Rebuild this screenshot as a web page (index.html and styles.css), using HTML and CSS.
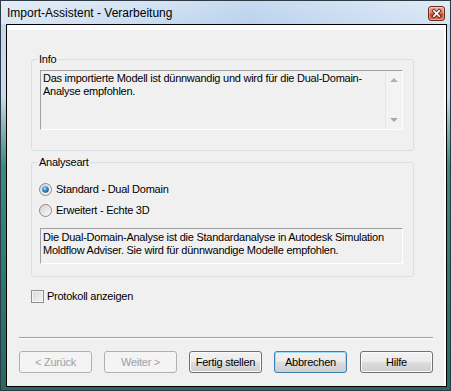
FILE: index.html
```html
<!DOCTYPE html>
<html lang="de">
<head>
<meta charset="UTF-8">
<title>Import-Assistent - Verarbeitung</title>
<link rel="stylesheet" href="styles.css">
</head>
<body>

<!-- Dialogfenster -->
<div class="window">
  <div class="titlebar">
    <span class="title">Import-Assistent - Verarbeitung</span>
    <button class="close" title="Schließen">
      <svg width="17" height="15" viewBox="0 0 17 15">
        <path d="M5.5 4.5 L11.5 10.5 M11.5 4.5 L5.5 10.5" stroke="#4a160c" stroke-width="3.8" stroke-linecap="square"/>
        <path d="M5.5 4.5 L11.5 10.5 M11.5 4.5 L5.5 10.5" stroke="#fff" stroke-width="2" stroke-linecap="square"/>
      </svg>
    </button>
  </div>

  <div class="client">
    <div class="page">

      <fieldset class="group info">
        <legend>Info</legend>
        <div class="memo memo-scroll">
          <div class="memo-text">Das importierte Modell ist dünnwandig und wird für die Dual-Domain-<br>Analyse empfohlen.</div>
          <div class="scrollbar">
            <span class="arrow up"></span>
            <span class="arrow down"></span>
          </div>
        </div>
      </fieldset>

      <fieldset class="group analysis">
        <legend>Analyseart</legend>
        <label class="option">
          <svg class="radio" width="13" height="13" viewBox="0 0 13 13">
            <defs>
              <linearGradient id="radioBg" x1="0" y1="0" x2="1" y2="1">
                <stop offset="0" stop-color="#d2d2d2"/>
                <stop offset="1" stop-color="#fcfcfc"/>
              </linearGradient>
              <radialGradient id="radioDot" cx="0.4" cy="0.35" r="0.75">
                <stop offset="0" stop-color="#a6e4ff"/>
                <stop offset="0.45" stop-color="#2f92d2"/>
                <stop offset="1" stop-color="#16486f"/>
              </radialGradient>
            </defs>
            <circle cx="6.5" cy="6.5" r="6" fill="url(#radioBg)" stroke="#8c8c8c"/>
            <circle cx="6.5" cy="6.5" r="3.3" fill="url(#radioDot)"/>
          </svg>
          <span>Standard - Dual Domain</span>
        </label>
        <label class="option">
          <svg class="radio" width="13" height="13" viewBox="0 0 13 13">
            <circle cx="6.5" cy="6.5" r="6" fill="url(#radioBg)" stroke="#8c8c8c"/>
          </svg>
          <span>Erweitert - Echte 3D</span>
        </label>
        <div class="memo desc">Die Dual-Domain-Analyse ist die Standardanalyse in Autodesk Simulation<br>Moldflow Adviser. Sie wird für dünnwandige Modelle empfohlen.</div>
      </fieldset>

      <label class="check">
        <span class="checkbox"></span>
        <span>Protokoll anzeigen</span>
      </label>

      <div class="separator"></div>

      <div class="buttons">
        <button class="btn" disabled>&lt; Zurück</button>
        <button class="btn" disabled>Weiter &gt;</button>
        <button class="btn">Fertig stellen</button>
        <button class="btn default">Abbrechen</button>
        <button class="btn help">Hilfe</button>
      </div>

    </div>
  </div>
</div>

</body>
</html>
```

FILE: styles.css
```css
body {
  margin: 0;
  font-family: 'Liberation Sans', Arial, sans-serif;
  font-size: 11px;
  letter-spacing: -0.25px;
  color: #000;
  background-color: #2a7a6e;
}
.window {
  width: 451px;
  height: 391px;
  box-sizing: border-box;
  border: 1px solid #2e3b44;
  padding: 0 3px 3px 5px;
  display: flex;
  flex-direction: column;
  background: linear-gradient(to bottom, #d4e3f3 0, #c4d8ee 24px, #c9dcef 95px, #8cb6b8 125px, #3b8c80 165px, #2c7e71 260px, #27695f 100%);
}
.titlebar {
  height: 23px;
  margin: 0 -3px 0 -5px;
  padding: 0 5px 0 6px;
  display: flex;
  align-items: flex-start;
  justify-content: space-between;
  background: linear-gradient(to right, rgba(255,255,255,0.35) 0, rgba(255,255,255,0.05) 35%, rgba(170,200,235,0.35) 55%, rgba(255,255,255,0.3) 100%);
}
.title {
  font-size: 12px;
  letter-spacing: 0;
  line-height: 16px;
  margin-top: 4px;
  color: #000;
}
.close {
  width: 17px;
  height: 15px;
  margin-top: 5px;
  padding: 0;
  border: 1px solid #6b2a1e;
  border-radius: 3px;
  background: linear-gradient(to bottom, #eab3a3 0, #d9806a 45%, #c6452d 55%, #d9735a 100%);
  box-shadow: inset 0 0 0 1px rgba(255,255,255,0.35);
  display: flex;
  align-items: center;
  justify-content: center;
}
.close svg {
  display: block;
}
.client {
  flex: 1;
  border: 1px solid #000;
  display: flex;
}
.page {
  flex: 1;
  background-color: #f0f0f0;
  border-top: 5px solid #fff;
  border-right: 2px solid #fff;
  display: flex;
  flex-direction: column;
}

/* Gruppenrahmen */
.group {
  width: 383px;
  box-sizing: border-box;
  margin: 0 0 0 24px;
  padding: 0 10px 0 8px;
  border: 1px solid #d5dfe5;
  border-radius: 3px;
}
.group legend {
  margin-left: -3px;
  padding: 0 2px;
  line-height: 13px;
}
.info {
  margin-top: 23px;
  padding-bottom: 20px;
}
.analysis {
  margin-top: 5px;
  padding-bottom: 12px;
}

/* Textfelder */
.memo {
  width: 363px;
  box-sizing: border-box;
  border: 1px solid;
  border-color: #a0a0a0 #fff #fff #a0a0a0;
  background-color: #f0f0f0;
  line-height: 13px;
  white-space: nowrap;
}
.memo-scroll {
  margin-top: 4px;
  height: 60px;
  display: flex;
}
.memo-text {
  flex: 1;
  padding: 1px 2px;
}
.scrollbar {
  width: 17px;
  box-sizing: border-box;
  border-left: 1px solid #e6e6e6;
  background-color: #f3f3f3;
  display: flex;
  flex-direction: column;
  justify-content: space-between;
  align-items: center;
  padding: 7px 0 7px;
}
.arrow {
  width: 0;
  height: 0;
  border-left: 4px solid transparent;
  border-right: 4px solid transparent;
}
.arrow.up {
  border-bottom: 4px solid #b0b0b0;
}
.arrow.down {
  border-top: 4px solid #a8a8a8;
}
.desc {
  margin-top: 10px;
  height: 36px;
  padding: 2px 2px;
}

/* Optionen */
.option {
  display: flex;
  align-items: center;
  height: 16px;
  gap: 4px;
  margin-left: -1px;
}
.option:first-of-type {
  margin-top: 12px;
}
.option + .option {
  margin-top: 5px;
}
.radio {
  display: block;
  flex: none;
}
.check {
  display: flex;
  align-items: center;
  gap: 3px;
  height: 16px;
  margin: 11px 0 0 24px;
}
.checkbox {
  width: 13px;
  height: 13px;
  box-sizing: border-box;
  border: 1px solid #8e8f8f;
  background: linear-gradient(135deg, #d8d8d8 0, #f4f4f4 100%);
  box-shadow: inset 0 0 0 1px #f4f4f4;
}

.separator {
  margin: 33px 0 0 12px;
  width: 414px;
  height: 1px;
  background-color: #a0a0a0;
  border-bottom: 1px solid #fff;
}

/* Schaltflächen */
.buttons {
  display: flex;
  gap: 12px;
  margin: 12px 0 0 12px;
}
.btn {
  width: 73px;
  height: 22px;
  padding: 0;
  font-family: inherit;
  font-size: 11px;
  letter-spacing: -0.25px;
  color: #000;
  border: 1px solid #707070;
  border-radius: 3px;
  background: linear-gradient(to bottom, #f2f2f2 0, #ebebeb 50%, #dddddd 50%, #cfcfcf 100%);
  box-shadow: inset 0 0 0 1px #fbfbfb;
}
.btn:disabled {
  color: #a0a0a0;
  border-color: #adb2b5;
  background: #f4f4f4;
  box-shadow: none;
}
.btn.default {
  border-color: #3c7fb1;
  box-shadow: inset 0 0 0 1px #9fdcf7;
}
.btn.help {
  margin-left: 1px;
}
```
